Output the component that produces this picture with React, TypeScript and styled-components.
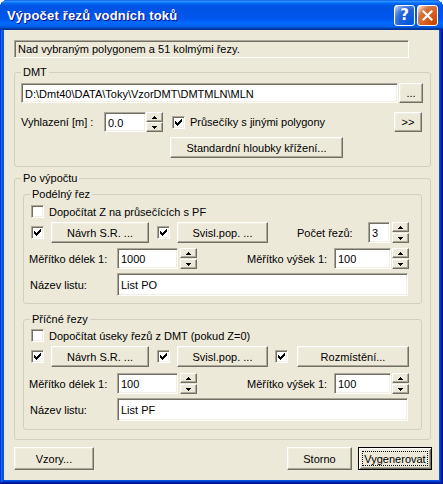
import styled, { createGlobalStyle } from 'styled-components';

const FACE = '#ECE9D8';

const GlobalStyle = createGlobalStyle`
  html, body {
    margin: 0;
    padding: 0;
    background: #fff;
  }
  body {
    font-family: 'Liberation Sans', Arial, sans-serif;
    font-size: 11px;
    color: #000;
  }
`;

function CheckMark() {
  const cols = [2, 3, 4, 3, 2, 1, 0];
  return (
    <svg width="7" height="7" viewBox="0 0 7 7" shapeRendering="crispEdges">
      <path d={cols.map((y, x) => `M${x} ${y}h1v3h-1z`).join('')} fill="#000" />
    </svg>
  );
}

function Arrow({ dir }: { dir: 'up' | 'down' }) {
  return (
    <svg width="5" height="3" viewBox="0 0 5 3" shapeRendering="crispEdges">
      {dir === 'up' ? (
        <path d="M2 0h1v1h1v1h1v1H0V2h1V1h1z" fill="#000" />
      ) : (
        <path d="M0 0h5v1H4v1H3v1H2V2H1V1H0z" fill="#000" />
      )}
    </svg>
  );
}

function Spin({ height, ml = 1 }: { height: number; ml?: number }) {
  return (
    <SpinBox $h={height} $ml={ml}>
      <SpinButton>
        <Arrow dir="up" />
      </SpinButton>
      <SpinButton>
        <Arrow dir="down" />
      </SpinButton>
    </SpinBox>
  );
}

function Check({ checked, ml = 0 }: { checked?: boolean; ml?: number }) {
  return <CheckBox $ml={ml}>{checked && <CheckMark />}</CheckBox>;
}

export default function App() {
  return (
    <>
      <GlobalStyle />
      <Window>
        <TitleBar>
          <Title>Výpočet řezů vodních toků</Title>
          <HelpButton>?</HelpButton>
          <CloseButton>
            <svg width="11" height="11" viewBox="0 0 11 11">
              <path d="M1.5 1.5l8 8M9.5 1.5l-8 8" stroke="#fff" strokeWidth="2.2" strokeLinecap="square" />
            </svg>
          </CloseButton>
        </TitleBar>

        <Client>
          <InfoBox>Nad vybraným polygonem a 51 kolmými řezy.</InfoBox>

          <Group $mt={14} $pl={6} $pr={8} $pb={8}>
            <Caption $ml={0}>DMT</Caption>
            <Row $mt={4} $h={20}>
              <TextBox $w={377}>D:\Dmt40\DATA\Toky\VzorDMT\DMTMLN\MLN</TextBox>
              <Button $w={24} $ml={1}>...</Button>
            </Row>
            <Row $mt={9} $h={20}>
              <Label $w={83}>Vyhlazení [m] :</Label>
              <TextBox $w={42}>0.0</TextBox>
              <Spin height={20} ml={0} />
              <Check checked ml={9} />
              <Label $ml={5}>Průsečíky s jinými polygony</Label>
              <Button $w={28} $push>&gt;&gt;</Button>
            </Row>
            <Row $mt={5} $h={21}>
              <Button $w={173} $ml={149}>Standardní hloubky křížení...</Button>
            </Row>
          </Group>

          <Group $mt={11} $pl={8} $pr={8} $pb={9}>
            <Caption $ml={-2}>Po výpočtu</Caption>

            <Group $mt={9} $pl={7} $pr={13} $pb={7}>
              <Caption $ml={-1}>Podélný řez</Caption>
              <Row $mt={4} $h={13}>
                <Check />
                <Label $ml={5}>Dopočítat Z na průsečících s PF</Label>
              </Row>
              <Row $mt={4} $h={21}>
                <Check checked />
                <Button $w={98} $ml={7}>Návrh S.R. ...</Button>
                <Check checked ml={8} />
                <Button $w={91} $ml={7}>Svisl.pop. ...</Button>
                <Label $w={71} $ml={29}>Počet řezů:</Label>
                <TextBox $w={22}>3</TextBox>
                <Spin height={21} ml={2} />
              </Row>
              <Row $mt={5} $h={21}>
                <Label $w={88} $ml={-2}>Měřítko délek 1:</Label>
                <TextBox $w={61}>1000</TextBox>
                <Spin height={21} ml={2} />
                <Label $w={87} $ml={50}>Měřítko výšek 1:</Label>
                <TextBox $w={57}>100</TextBox>
                <Spin height={21} ml={1} />
              </Row>
              <Row $mt={4} $h={23}>
                <Label $w={87} $ml={-1}>Název listu:</Label>
                <TextBox $w={291}>List PO</TextBox>
              </Row>
            </Group>

            <Group $mt={15} $pl={7} $pr={13} $pb={8}>
              <Caption $ml={-1}>Příčné řezy</Caption>
              <Row $mt={3} $h={13}>
                <Check />
                <Label $ml={5}>Dopočítat úseky řezů z DMT (pokud Z=0)</Label>
              </Row>
              <Row $mt={4} $h={21}>
                <Check checked />
                <Button $w={98} $ml={7}>Návrh S.R. ...</Button>
                <Check checked ml={8} />
                <Button $w={91} $ml={7}>Svisl.pop. ...</Button>
                <Check checked ml={7} />
                <Button $w={112} $ml={9}>Rozmístění...</Button>
              </Row>
              <Row $mt={6} $h={21}>
                <Label $w={88} $ml={-2}>Měřítko délek 1:</Label>
                <TextBox $w={61}>100</TextBox>
                <Spin height={21} ml={2} />
                <Label $w={87} $ml={50}>Měřítko výšek 1:</Label>
                <TextBox $w={57}>100</TextBox>
                <Spin height={21} ml={1} />
              </Row>
              <Row $mt={4} $h={23}>
                <Label $w={87} $ml={-1}>Název listu:</Label>
                <TextBox $w={291}>List PF</TextBox>
              </Row>
            </Group>
          </Group>

          <Footer>
            <Button $w={80}>Vzory...</Button>
            <Button $w={65} $push>Storno</Button>
            <Button $w={74} $ml={6} $default>
              <Focus>Vygenerovat</Focus>
            </Button>
          </Footer>
        </Client>
      </Window>
    </>
  );
}

const Window = styled.div`
  width: 443px;
  height: 484px;
  box-sizing: border-box;
  display: flex;
  flex-direction: column;
  border-radius: 8px 8px 0 0;
  overflow: hidden;
  background: #0855dd;
  box-shadow: inset -1px -1px #00138c, inset 1px 1px #0831d9, inset -2px -2px #001ea0,
    inset 2px 2px #166aee, inset -3px -3px #003bda, inset 3px 3px #0855dd;
`;

const TitleBar = styled.div`
  height: 30px;
  flex: none;
  display: flex;
  align-items: center;
  padding: 0 5px 0 7px;
  background: linear-gradient(
    to bottom,
    #0058ee 0%,
    #3593ff 4%,
    #288eff 6%,
    #127dff 8%,
    #036ffc 10%,
    #0262ee 14%,
    #0057e5 20%,
    #0054e3 24%,
    #0055eb 56%,
    #005bf5 66%,
    #026afe 76%,
    #0062ef 86%,
    #0052d6 92%,
    #0040ab 94%,
    #003092 100%
  );
`;

const Title = styled.div`
  flex: 1;
  color: #fff;
  font-family: 'Liberation Sans', Arial, sans-serif;
  font-weight: bold;
  font-size: 13px;
  letter-spacing: 0.2px;
  text-shadow: 1px 1px #0f1089;
  padding-top: 1px;
`;

const CaptionButton = styled.div`
  width: 21px;
  height: 21px;
  box-sizing: border-box;
  border: 1px solid #fff;
  border-radius: 3px;
  display: flex;
  align-items: center;
  justify-content: center;
  color: #fff;
`;

const HelpButton = styled(CaptionButton)`
  background: radial-gradient(circle at 90% 90%, #0054e9 0%, #2263d5 55%, #4479e4 70%, #a3bbec 90%, #fff 100%);
  font-family: 'DejaVu Sans', sans-serif;
  font-weight: bold;
  font-size: 15px;
  line-height: 1;
`;

const CloseButton = styled(CaptionButton)`
  margin-left: 2px;
  background: radial-gradient(circle at 90% 90%, #cc4600 0%, #dc6527 55%, #cd7546 70%, #ffccb2 90%, #fff 100%);
`;

const Client = styled.div`
  flex: 1;
  margin: 0 4px 4px 4px;
  background: ${FACE};
  display: flex;
  flex-direction: column;
  padding: 10px 8px 10px 10px;
`;

const InfoBox = styled.div`
  width: 395px;
  height: 18px;
  box-sizing: border-box;
  border: 1px solid;
  border-color: #aca899 #fff #fff #aca899;
  box-shadow: inset 1px 1px #716f64;
  padding: 0 3px;
  line-height: 16px;
`;

type GroupProps = { $mt: number; $pl: number; $pr: number; $pb: number };
const Group = styled.div<GroupProps>`
  margin-top: ${({ $mt }) => $mt}px;
  border: 1px solid #d0d0bf;
  border-radius: 3px;
  padding: 0 ${({ $pr }) => $pr}px ${({ $pb }) => $pb}px ${({ $pl }) => $pl}px;
  display: flex;
  flex-direction: column;
`;

const Caption = styled.div<{ $ml: number }>`
  align-self: flex-start;
  margin: -7px 0 0 ${({ $ml }) => $ml}px;
  padding: 0 2px;
  height: 13px;
  line-height: 13px;
  background: ${FACE};
`;

const Row = styled.div<{ $mt: number; $h: number }>`
  display: flex;
  align-items: center;
  margin-top: ${({ $mt }) => $mt}px;
  height: ${({ $h }) => $h}px;
  & > * {
    flex-shrink: 0;
  }
`;

const Label = styled.span<{ $w?: number; $ml?: number }>`
  width: ${({ $w }) => ($w ? `${$w}px` : 'auto')};
  margin-left: ${({ $ml }) => $ml ?? 0}px;
  white-space: nowrap;
`;

const TextBox = styled.div<{ $w: number }>`
  width: ${({ $w }) => $w}px;
  height: 100%;
  box-sizing: border-box;
  background: #fff;
  border: 1px solid;
  border-color: #aca899 #fff #fff #aca899;
  box-shadow: inset 1px 1px #716f64, inset -1px -1px #f1efe2;
  padding: 1px 3px 0;
  display: flex;
  align-items: center;
  white-space: nowrap;
  overflow: hidden;
`;

type ButtonProps = { $w: number; $ml?: number; $push?: boolean; $default?: boolean };
const Button = styled.div<ButtonProps>`
  width: ${({ $w }) => $w}px;
  height: 100%;
  box-sizing: border-box;
  margin-left: ${({ $push, $ml }) => ($push ? 'auto' : `${$ml ?? 0}px`)};
  margin-right: ${({ $default }) => ($default ? '-1px' : '0')};
  background: ${FACE};
  border: 1px solid;
  border-color: #fff #716f64 #716f64 #fff;
  box-shadow: inset -1px -1px #aca899, inset 1px 1px #f1efe2;
  display: flex;
  align-items: center;
  justify-content: center;
  white-space: nowrap;
  ${({ $default }) =>
    $default &&
    `
    border-color: #000;
    box-shadow: inset 1px 1px #fff, inset -1px -1px #716f64, inset 2px 2px #f1efe2, inset -2px -2px #aca899;
    padding: 3px;
    align-items: stretch;
  `}
`;

const Focus = styled.span`
  flex: 1;
  border: 1px dotted #000;
  display: flex;
  align-items: center;
  justify-content: center;
  overflow: visible;
`;

const SpinBox = styled.div<{ $h: number; $ml: number }>`
  width: 17px;
  height: ${({ $h }) => $h}px;
  margin-left: ${({ $ml }) => $ml}px;
  display: flex;
  flex-direction: column;
  justify-content: space-between;
`;

const SpinButton = styled.div`
  height: 10px;
  box-sizing: border-box;
  background: ${FACE};
  border: 1px solid;
  border-color: #fff #716f64 #716f64 #fff;
  box-shadow: inset -1px -1px #aca899;
  display: flex;
  align-items: center;
  justify-content: center;
`;

const CheckBox = styled.span<{ $ml: number }>`
  width: 13px;
  height: 13px;
  box-sizing: border-box;
  margin-left: ${({ $ml }) => $ml}px;
  background: #fff;
  border: 1px solid;
  border-color: #aca899 #fff #fff #aca899;
  box-shadow: inset 1px 1px #716f64, inset -1px -1px #f1efe2;
  display: flex;
  padding: 2px;
`;

const Footer = styled.div`
  display: flex;
  margin-top: 7px;
  height: 23px;
`;
